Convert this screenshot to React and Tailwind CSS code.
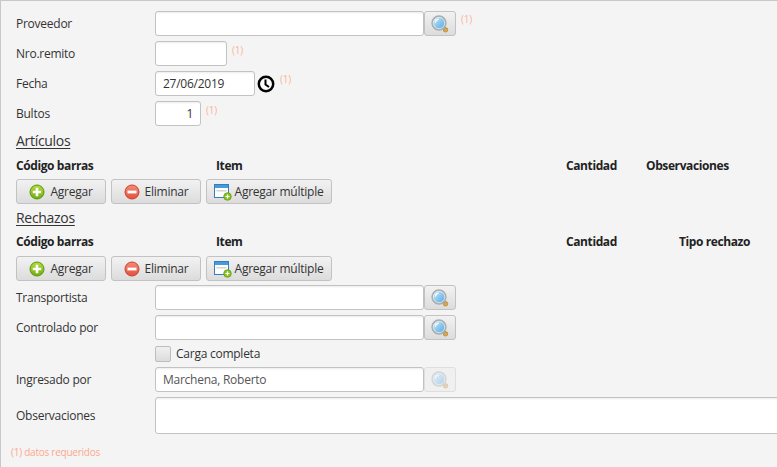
const inputCls = "h-[25px] bg-white border border-[#c2c2c2] rounded-[3px] shadow-[inset_0_2px_2px_-1px_rgba(0,0,0,0.08)] flex items-center text-[12px] text-[#333]";

function Lens({ faded }) {
  return (
    <svg width="20" height="20" viewBox="0 0 20 20" className={faded ? "opacity-40" : ""}>
      <defs>
        <linearGradient id="lensFill" x1="0" y1="0" x2="1" y2="1">
          <stop offset="0" stopColor="#d5eefb" />
          <stop offset="1" stopColor="#4aa3e0" />
        </linearGradient>
      </defs>
      <circle cx="15.5" cy="15.8" r="2.3" fill="#e0a63f" stroke="#a87a2a" strokeWidth="0.6" />
      <path d="M13 13l2 2" stroke="#9a9a9a" strokeWidth="2" />
      <circle cx="9" cy="9" r="6.8" fill="url(#lensFill)" stroke="#a8adb1" strokeWidth="1.7" />
      <circle cx="9" cy="9" r="5.7" fill="none" stroke="#eef3f6" strokeWidth="0.7" />
      <path d="M5.2 8.6a3.9 3.9 0 0 1 3.4-3.4" stroke="#fff" strokeWidth="1.2" fill="none" />
    </svg>
  );
}

function LensButton({ faded }) {
  return (
    <div className={"w-[32px] h-[25px] flex items-center justify-center rounded-[3px] border " + (faded ? "border-[#dedede] bg-[#f0f0f0]" : "border-[#c2c2c2] bg-gradient-to-b from-[#f2f2f2] to-[#dcdcdc]")}>
      <Lens faded={faded} />
    </div>
  );
}

function Req({ className }) {
  return <span className={"text-[10px] leading-none text-[#f9b49c] self-start " + className}>(1)</span>;
}

function Row({ label, className, children }) {
  return (
    <div className={"flex items-center " + className}>
      <div className="w-[139px] shrink-0 text-[12px] text-[#333]">{label}</div>
      {children}
    </div>
  );
}

function Btn({ icon, label, className }) {
  return (
    <div className={"h-[25px] flex items-center justify-center gap-[4px] rounded-[3px] border border-[#c2c2c2] bg-gradient-to-b from-[#f2f2f2] to-[#dcdcdc] text-[12px] text-[#333] " + className}>
      {icon}
      <span>{label}</span>
    </div>
  );
}

const PlusIcon = (
  <svg width="16" height="16" viewBox="0 0 16 16" className="mr-[1px]">
    <defs>
      <linearGradient id="greenFill" x1="0" y1="0" x2="0" y2="1">
        <stop offset="0" stopColor="#b5dc3a" />
        <stop offset="1" stopColor="#6fae14" />
      </linearGradient>
    </defs>
    <circle cx="8" cy="8" r="7" fill="url(#greenFill)" stroke="#5d9412" />
    <path d="M8 3.8v8.4M3.8 8h8.4" stroke="#fff" strokeWidth="2.6" />
  </svg>
);
const MinusIcon = (
  <svg width="16" height="16" viewBox="0 0 16 16" className="mr-[1px]">
    <defs>
      <linearGradient id="redFill" x1="0" y1="0" x2="0" y2="1">
        <stop offset="0" stopColor="#f58a78" />
        <stop offset="1" stopColor="#e4503c" />
      </linearGradient>
    </defs>
    <circle cx="8" cy="8" r="7" fill="url(#redFill)" stroke="#c8442f" />
    <path d="M3.5 8h9" stroke="#fff" strokeWidth="2.8" />
  </svg>
);
const WindowIcon = (
  <svg width="18" height="18" viewBox="0 0 18 18" className="-ml-[1px] -mr-[1px]">
    <rect x="0.5" y="1.5" width="14" height="13" fill="#fff" stroke="#2f7fc1" />
    <rect x="1" y="2" width="13" height="3" fill="#4b9ad8" />
    <rect x="2.5" y="7" width="10" height="1.5" fill="#d4d4d4" />
    <circle cx="13.5" cy="13.5" r="3.8" fill="#8cc21f" stroke="#5d9412" strokeWidth="0.7" />
    <path d="M13.5 11.5v4M11.5 13.5h4" stroke="#fff" strokeWidth="1.2" />
  </svg>
);

function Buttons({ className }) {
  return (
    <div className={"flex gap-[5px] " + className}>
      <Btn icon={PlusIcon} label="Agregar" className="w-[90px]" />
      <Btn icon={MinusIcon} label="Eliminar" className="w-[90px]" />
      <Btn icon={WindowIcon} label="Agregar múltiple" className="w-[126px]" />
    </div>
  );
}

function Header({ last, lastClass, className }) {
  return (
    <div className={"flex text-[12px] font-bold text-[#222] leading-[16px] tracking-[-0.4px] " + className}>
      <div className="w-[200px]">Código barras</div>
      <div className="w-[350px]">Item</div>
      <div className={lastClass}>Cantidad</div>
      <div>{last}</div>
    </div>
  );
}

export default function App() {
  return (
    <div className="w-[777px] h-[467px] overflow-hidden bg-[#f4f4f4] border-t border-l border-[#c8c8c8] pl-[15px] pt-[10px] tracking-[-0.25px]" style={{ fontFamily: '"Open Sans", "Noto Sans", sans-serif' }}>
      <Row label="Proveedor">
        <div className={inputCls + " w-[269px]"} />
        <LensButton />
        <Req className="ml-[5px] mt-[3px]" />
      </Row>
      <Row label="Nro.remito" className="mt-[5px]">
        <div className={inputCls + " w-[72px]"} />
        <Req className="ml-[5px] mt-[4px]" />
      </Row>
      <Row label="Fecha" className="mt-[5px]">
        <div className={inputCls + " w-[100px] pl-[7px]"}>27/06/2019</div>
        <svg width="18" height="18" viewBox="0 0 18 18" className="ml-[2px]">
          <circle cx="9" cy="9" r="7.2" fill="#fff" stroke="#000" strokeWidth="2.5" />
          <path d="M8.5 4.5V9.5L12 12" stroke="#000" strokeWidth="2" fill="none" />
        </svg>
        <Req className="ml-[5px] mt-[3px]" />
      </Row>
      <Row label="Bultos" className="mt-[5px]">
        <div className={inputCls + " w-[46px] justify-end pr-[7px]"}>1</div>
        <Req className="ml-[5px] mt-[4px]" />
      </Row>
      <div className="mt-[6px] text-[14px] leading-[18px] tracking-[-0.3px] text-[#333] underline underline-offset-2 w-fit">Artículos</div>
      <Header last="Observaciones" lastClass="w-[80px]" className="mt-[8px]" />
      <Buttons className="mt-[5px]" />
      <div className="mt-[5px] text-[14px] leading-[18px] tracking-[-0.3px] text-[#333] underline underline-offset-2 w-fit">Rechazos</div>
      <Header last="Tipo rechazo" lastClass="w-[113px]" className="mt-[7px]" />
      <Buttons className="mt-[6px]" />
      <Row label="Transportista" className="mt-[4px]">
        <div className={inputCls + " w-[269px]"} />
        <LensButton />
      </Row>
      <Row label="Controlado por" className="mt-[5px]">
        <div className={inputCls + " w-[269px]"} />
        <LensButton />
      </Row>
      <div className="flex items-center mt-[6px] ml-[139px] h-[16px] text-[12px] text-[#333]">
        <div className="w-[16px] h-[16px] rounded-[2px] border border-[#bdbdbd] bg-gradient-to-b from-[#f0f0f0] to-[#dcdcdc] mr-[5px]" />
        Carga completa
      </div>
      <Row label="Ingresado por" className="mt-[5px]">
        <div className={inputCls + " w-[269px] pl-[7px] text-[#555]"}>Marchena, Roberto</div>
        <LensButton faded />
      </Row>
      <Row label="Observaciones" className="mt-[5px]">
        <div className="h-[37px] w-[660px] shrink-0 bg-white border border-[#c2c2c2] rounded-l-[3px] shadow-[inset_0_2px_2px_-1px_rgba(0,0,0,0.08)]" />
      </Row>
      <div className="mt-[11px] -ml-[5px] text-[10px] leading-[14px] text-[#fba98c]">(1) datos requeridos</div>
    </div>
  );
}
